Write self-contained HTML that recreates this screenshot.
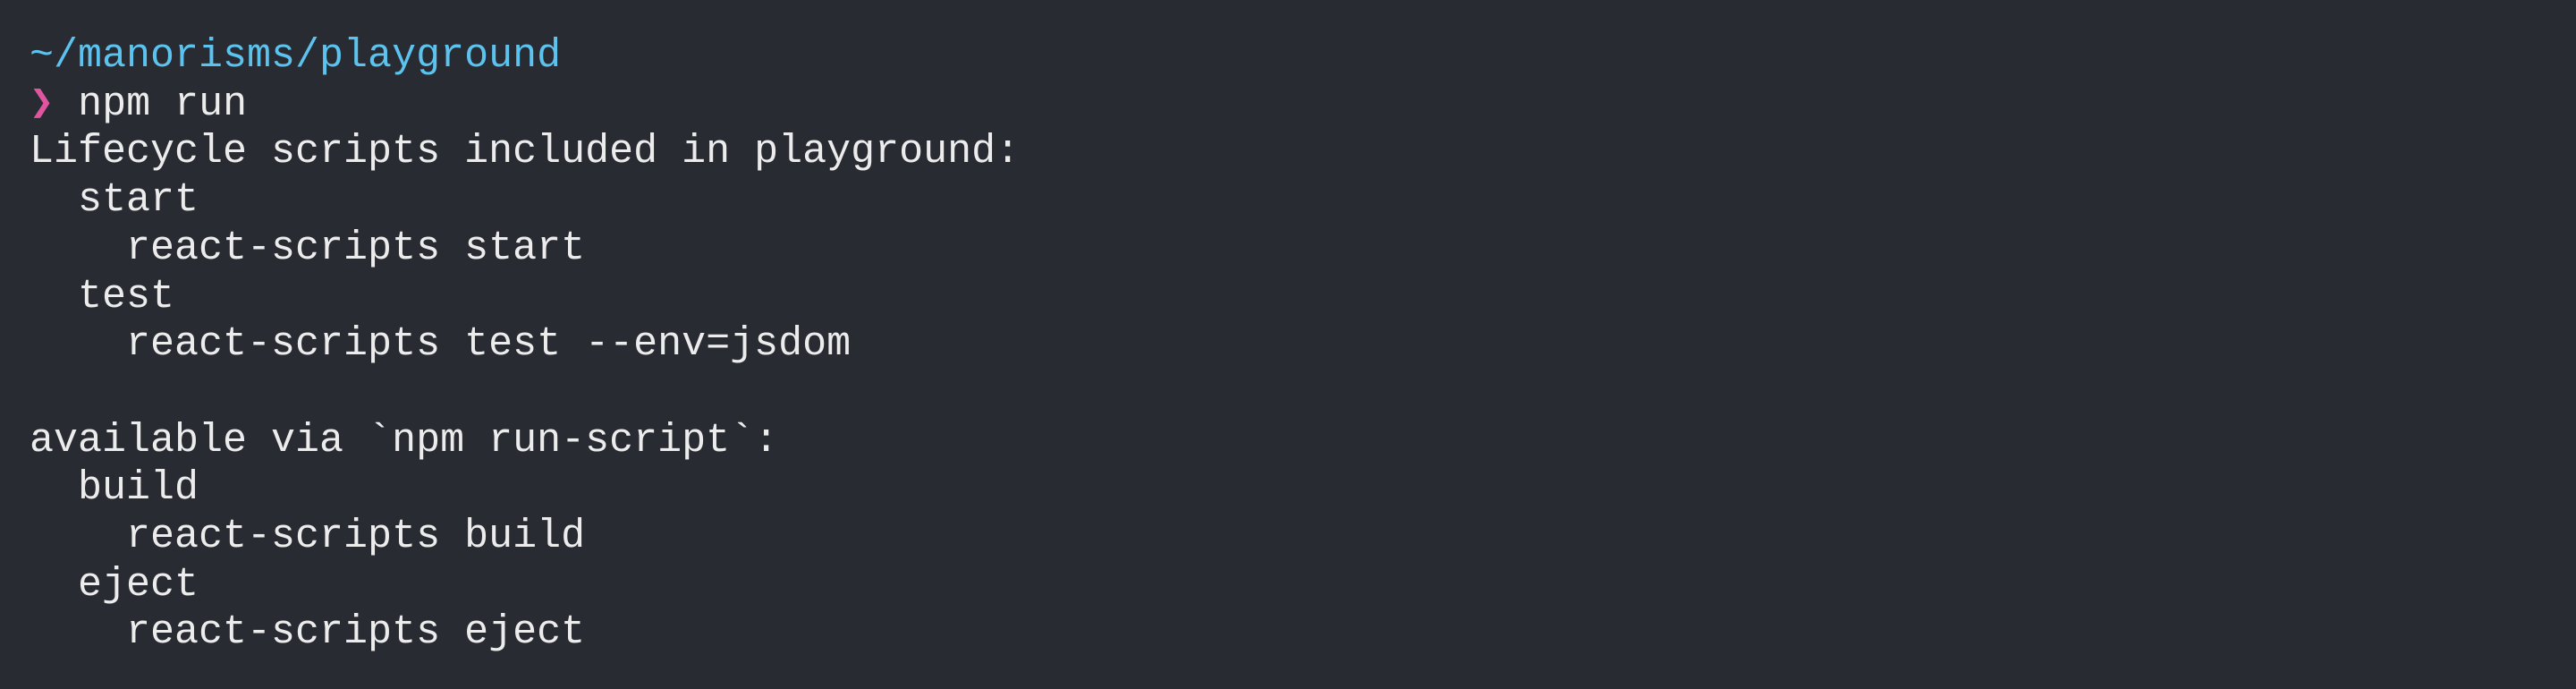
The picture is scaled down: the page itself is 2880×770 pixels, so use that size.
<!DOCTYPE html>
<html><head><meta charset="utf-8"><style>
html,body{margin:0;padding:0;width:2880px;height:770px;overflow:hidden;background:#292b33;}
pre{margin:0;position:absolute;left:33px;top:36px;font-family:"Liberation Mono","DejaVu Sans Mono",monospace;font-size:45px;line-height:53.7px;color:#ececec;}
.b{color:#5cc2ee}.p{color:#e0559f}
</style></head><body>
<pre><span class="b">~/manorisms/playground</span>
<span class="p">❯</span> npm run
Lifecycle scripts included in playground:
  start
    react-scripts start
  test
    react-scripts test --env=jsdom

available via `npm run-script`:
  build
    react-scripts build
  eject
    react-scripts eject</pre>
</body></html>
